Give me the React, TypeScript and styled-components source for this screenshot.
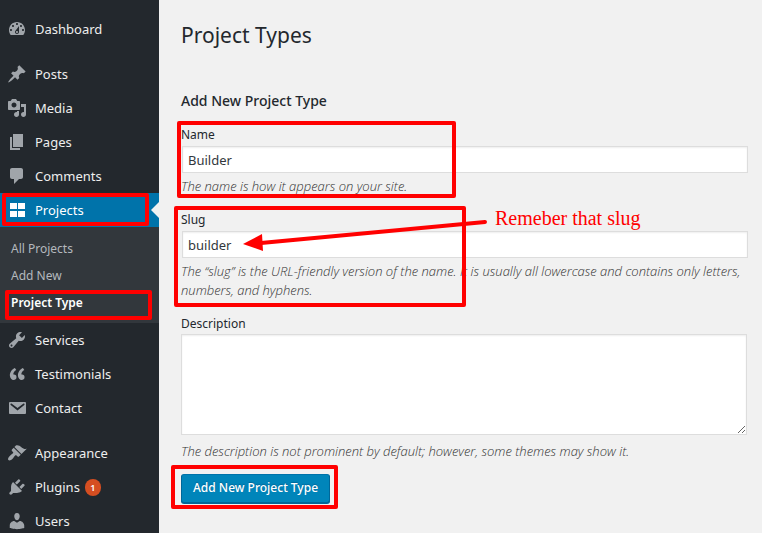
import React from "react";
import styled, { createGlobalStyle, css } from "styled-components";

const GlobalStyle = createGlobalStyle`
  *, *::before, *::after { box-sizing: border-box; }
  body {
    margin: 0;
    background: #f1f1f1;
    color: #32373c;
    font-family: "Noto Sans", "Open Sans", sans-serif;
    font-size: 12px;
    line-height: 19px;
  }
`;

const Shell = styled.div`
  display: flex;
  height: 100vh;
  overflow: hidden;
`;

const Sidebar = styled.nav`
  flex: 0 0 159px;
  padding-top: 12px;
  background: #23282d;
  overflow: hidden;
`;

const MenuGroup = styled.ul`
  list-style: none;
  margin: 0 0 11px;
  padding: 0;
`;

const MenuEntry = styled.li`
  position: relative;
`;

const MenuLink = styled.a<{ $current?: boolean }>`
  position: relative;
  display: flex;
  align-items: center;
  gap: 8px;
  height: 34px;
  padding-left: 7px;
  color: #eee;
  font-size: 13px;
  text-decoration: none;

  svg {
    width: 20px;
    height: 20px;
    fill: #a0a5aa;
  }

  ${({ $current }) =>
    $current &&
    css`
      background: #0073aa;
      color: #fff;

      svg {
        fill: #fff;
      }

      &::after {
        content: "";
        position: absolute;
        right: 0;
        top: 9px;
        border: 8px solid transparent;
        border-left-width: 0;
        border-right-color: #f1f1f1;
      }
    `}
`;

const Badge = styled.span`
  display: inline-flex;
  align-items: center;
  justify-content: center;
  width: 16px;
  height: 17px;
  margin-left: -3px;
  border-radius: 9px;
  background: #d54e21;
  color: #fff;
  font-size: 9px;
  font-weight: 600;
`;

const Submenu = styled.ul`
  list-style: none;
  margin: 0;
  padding: 8px 0 7px;
  background: #32373c;
`;

const SubmenuLink = styled.a<{ $current?: boolean }>`
  display: block;
  height: 27px;
  padding-left: 11px;
  line-height: 27px;
  text-decoration: none;
  color: ${({ $current }) => ($current ? "#fff" : "#b4b9be")};
  font-weight: ${({ $current }) => ($current ? 600 : 400)};
`;

const Main = styled.main`
  flex: 1;
  min-width: 0;
  padding: 20px 14px 0 22px;
`;

const PageTitle = styled.h1`
  margin: 0;
  color: #23282d;
  font-size: 21px;
  font-weight: 400;
  line-height: 30px;
`;

const FormTitle = styled.h2`
  margin: 41px 0 13px;
  color: #23282d;
  font-size: 14px;
  font-weight: 500;
  line-height: 20px;
`;

const Field = styled.div`
  position: relative;
  margin-bottom: 13px;
`;

const Label = styled.label`
  display: block;
  padding-top: 1px;
  line-height: 20px;
  color: #23282d;
`;

const controlStyle = css`
  display: block;
  border: 1px solid #ddd;
  border-radius: 0;
  background: #fff;
  box-shadow: inset 0 1px 2px rgba(0, 0, 0, 0.07);
  color: #32373c;
  font-family: inherit;
  outline: none;
`;

const TextInput = styled.input`
  ${controlStyle}
  width: calc(100% - 1px);
  height: 27px;
  margin: 1px 0 4px 1px;
  padding: 3px 5px;
  font-size: 13px;
`;

const TextArea = styled.textarea`
  ${controlStyle}
  width: calc(100% - 1px);
  height: 101px;
  margin: 0 0 7px;
  padding: 2px 6px;
  font-size: 13px;
  resize: vertical;
`;

const Hint = styled.p`
  margin: 0;
  color: #333;
  font-family: "Open Sans", "Noto Sans", sans-serif;
  font-size: 13px;
  font-style: italic;
  font-weight: 300;
`;

const SubmitRow = styled.div`
  position: relative;
  display: inline-block;
`;

const SubmitButton = styled.button`
  display: block;
  height: 29px;
  padding: 0 11px 2px;
  border: 1px solid #006799;
  border-top-color: #0073aa;
  border-radius: 3px;
  background: #0085ba;
  box-shadow: 0 1px 0 #006799;
  color: #fff;
  font-family: inherit;
  font-size: 12px;
  font-weight: 500;
  text-shadow: 0 -1px 1px #006799;
`;

type Inset = { top: number; left: number; width: number; height: number };

const Highlight = styled.div<{ $box: Inset }>`
  position: absolute;
  z-index: 2;
  top: ${({ $box }) => $box.top}px;
  left: ${({ $box }) => $box.left}px;
  width: ${({ $box }) => $box.width}px;
  height: ${({ $box }) => $box.height}px;
  border: 4px solid #f00;
  border-radius: 2px;
  pointer-events: none;
`;

const Arrow = styled.svg`
  position: absolute;
  z-index: 2;
  top: 8px;
  left: 62px;
  width: 250px;
  height: 36px;
  pointer-events: none;
`;

const Note = styled.span`
  position: absolute;
  z-index: 2;
  top: -3px;
  left: 314px;
  color: #f00;
  font-family: "Liberation Serif", serif;
  font-size: 20px;
  line-height: 24px;
  white-space: nowrap;
`;

const ICONS = {
  dashboard:
    "M3.76 16h12.48c1.1-1.37 1.76-3.11 1.76-5 0-4.42-3.58-8-8-8s-8 3.58-8 8c0 1.89.66 3.63 1.76 5zM10 4c.55 0 1 .45 1 1s-.45 1-1 1-1-.45-1-1 .45-1 1-1zM6 6c.55 0 1 .45 1 1s-.45 1-1 1-1-.45-1-1 .45-1 1-1zm8 0c.55 0 1 .45 1 1s-.45 1-1 1-1-.45-1-1 .45-1 1-1zm-5.37 5.55L12 7v6c0 1.1-.9 2-2 2s-2-.9-2-2c0-.57.24-1.08.63-1.45zM4 10c.55 0 1 .45 1 1s-.45 1-1 1-1-.45-1-1 .45-1 1-1zm12 0c.55 0 1 .45 1 1s-.45 1-1 1-1-.45-1-1 .45-1 1-1zm-5 3c0-.55-.45-1-1-1s-1 .45-1 1 .45 1 1 1 1-.45 1-1z",
  pin: "M10.44 3.02l1.82-1.82 6.36 6.35-1.83 1.82c-1.05-.68-2.48-.57-3.41.36l-.75.75c-.92.93-1.04 2.35-.35 3.41l-1.83 1.82-2.41-2.41-2.8 2.79c-.42.42-3.38 2.71-3.8 2.29s1.86-3.39 2.28-3.81l2.79-2.79L4.1 9.36l1.83-1.82c1.05.69 2.48.57 3.4-.36l.75-.75c.93-.92 1.05-2.35.36-3.41z",
  media:
    "M13 11V4c0-.55-.45-1-1-1h-1.67L9 1H5L3.67 3H2c-.55 0-1 .45-1 1v7c0 .55.45 1 1 1h10c.55 0 1-.45 1-1zM7 4.5c1.38 0 2.5 1.12 2.5 2.5S8.38 9.5 7 9.5 4.5 8.38 4.5 7 5.62 4.5 7 4.5zM14 6h5v10.5c0 1.38-1.12 2.5-2.5 2.5S14 17.88 14 16.5s1.12-2.5 2.5-2.5c.17 0 .34.02.5.05V9h-3V6zm-4 8.05V13h2v3.5c0 1.38-1.12 2.5-2.5 2.5S7 17.88 7 16.5 8.12 14 9.5 14c.17 0 .34.02.5.05z",
  page: "M6 15V2h10v13H6zm-1 1h8v2H3V5h2v11z",
  comment:
    "M5 2h9c1.1 0 2 .9 2 2v7c0 1.1-.9 2-2 2h-2l-5 5v-5H5c-1.1 0-2-.9-2-2V4c0-1.1.9-2 2-2z",
  grid: "M3 3h7v6H3zM11 3h7v6h-7zM3 11h7v6H3zM11 11h7v6h-7z",
  wrench:
    "M16.68 9.77c-1.34 1.34-3.3 1.67-4.95.99l-5.41 6.52c-.99.99-2.59.99-3.58 0s-.99-2.59 0-3.57l6.52-5.42c-.68-1.65-.35-3.61.99-4.95 1.28-1.28 3.12-1.62 4.72-1.06l-2.89 2.89 2.82 2.82 2.86-2.87c.53 1.58.18 3.39-1.08 4.65zM3.81 16.21c.4.39 1.04.39 1.43 0 .4-.4.4-1.04 0-1.43-.39-.4-1.03-.4-1.43 0-.39.39-.39 1.03 0 1.43z",
  quote:
    "M9.49 13.22c0-.74-.2-1.38-.61-1.9-.62-.78-1.83-.88-2.53-.72-.29-1.65 1.11-3.75 2.92-4.65L7.88 4c-2.73 1.3-5.42 4.28-4.96 8.05C3.21 14.43 4.59 16 6.54 16c.85 0 1.56-.25 2.12-.75s.83-1.18.83-2.03zm8.05 0c0-.74-.2-1.38-.61-1.9-.63-.78-1.83-.88-2.53-.72-.29-1.65 1.11-3.75 2.92-4.65L15.93 4c-2.73 1.3-5.41 4.28-4.95 8.05.29 2.38 1.66 3.95 3.61 3.95.85 0 1.56-.25 2.12-.75s.83-1.18.83-2.03z",
  mail: "M3.2 4h14.6c.8 0 1.2.4 1.2 1.2v9.6c0 .8-.4 1.2-1.2 1.2H3.2c-.8 0-1.2-.4-1.2-1.2V5.2c0-.8.4-1.2 1.2-1.2zm7.3 8.4l6.8-5.4c.4-.4.4-.8.1-1.1-.3-.4-.8-.4-1.2-.1l-5.7 4.2-5.7-4.2c-.4-.3-.9-.3-1.2.1-.3.3-.3.7.1 1.1z",
  brush:
    "M14.48 11.06L7.41 3.99l1.5-1.5c.5-.56 2.3-.47 3.51.32 1.21.8 1.43 1.28 2.91 2.1 1.18.64 2.45 1.26 4.45.85zm-.71.71L6.7 4.7 4.93 6.47c-.39.39-.39 1.02 0 1.41l1.06 1.06c.39.39.39 1.03 0 1.42-.6.6-1.43 1.11-2.21 1.69-.35.26-.7.53-1.01.84C1.43 14.23.4 16.08 1.4 17.07c.99 1 2.84-.03 4.18-1.36.31-.31.58-.66.85-1.02.57-.78 1.08-1.61 1.69-2.21.39-.39 1.02-.39 1.41 0l1.06 1.06c.39.39 1.02.39 1.41 0z",
  plug: "M13.11 4.36L9.87 7.6 8 5.73l3.24-3.24c.35-.34 1.05-.2 1.56.32.52.51.66 1.21.31 1.55zm-8 1.77l.91-1.12 9.01 9.01-1.19.84c-.71.71-2.63 1.16-3.82 1.16H6.14L4.9 17.26c-.59.59-1.54.59-2.12 0-.59-.58-.59-1.53 0-2.12l1.24-1.24v-3.88c0-1.13.4-3.19 1.09-3.89zm7.26 3.97l3.24-3.24c.34-.35 1.04-.21 1.55.31.52.51.66 1.21.31 1.55l-3.24 3.25z",
  user: "M10 9.25c-2.27 0-2.73-3.44-2.73-3.44C7 4.02 7.82 2 9.97 2c2.16 0 2.98 2.02 2.71 3.81 0 0-.41 3.44-2.68 3.44zm0 2.57L12.72 10c2.39 0 4.52 2.33 4.52 4.53v2.49s-3.65 1.13-7.24 1.13c-3.65 0-7.24-1.13-7.24-1.13v-2.49c0-2.25 1.94-4.48 4.47-4.48z",
};

type Item = {
  label: string;
  icon: keyof typeof ICONS;
  count?: number;
  children?: string[];
};

const GROUPS: Item[][] = [
  [{ label: "Dashboard", icon: "dashboard" }],
  [
    { label: "Posts", icon: "pin" },
    { label: "Media", icon: "media" },
    { label: "Pages", icon: "page" },
    { label: "Comments", icon: "comment" },
    {
      label: "Projects",
      icon: "grid",
      children: ["All Projects", "Add New", "Project Type"],
    },
    { label: "Services", icon: "wrench" },
    { label: "Testimonials", icon: "quote" },
    { label: "Contact", icon: "mail" },
  ],
  [
    { label: "Appearance", icon: "brush" },
    { label: "Plugins", icon: "plug", count: 1 },
    { label: "Users", icon: "user" },
  ],
];

function MenuItem({ item }: { item: Item }) {
  const current = Boolean(item.children);
  return (
    <MenuEntry>
      <MenuLink href="#" $current={current}>
        <svg viewBox="0 0 20 20" aria-hidden="true">
          <path d={ICONS[item.icon]} />
        </svg>
        {item.label}
        {item.count && <Badge>{item.count}</Badge>}
      </MenuLink>
      {current && <Highlight $box={{ top: 0, left: 2, width: 147, height: 33 }} />}
      {item.children && (
        <Submenu>
          {item.children.map((label) => {
            const selected = label === "Project Type";
            return (
              <MenuEntry key={label}>
                <SubmenuLink href="#" $current={selected}>
                  {label}
                </SubmenuLink>
                {selected && (
                  <Highlight $box={{ top: 1, left: 5, width: 147, height: 30 }} />
                )}
              </MenuEntry>
            );
          })}
        </Submenu>
      )}
    </MenuEntry>
  );
}

export default function App() {
  return (
    <>
      <GlobalStyle />
      <Shell>
        <Sidebar aria-label="Main menu">
          {GROUPS.map((group) => (
            <MenuGroup key={group[0].label}>
              {group.map((item) => (
                <MenuItem key={item.label} item={item} />
              ))}
            </MenuGroup>
          ))}
        </Sidebar>
        <Main>
          <PageTitle>Project Types</PageTitle>
          <FormTitle>Add New Project Type</FormTitle>
          <form onSubmit={(event) => event.preventDefault()}>
            <Field>
              <Label htmlFor="name">Name</Label>
              <TextInput id="name" type="text" defaultValue="Builder" />
              <Hint>The name is how it appears on your site.</Hint>
              <Highlight $box={{ top: -3, left: -4, width: 279, height: 77 }} />
            </Field>
            <Field>
              <Label htmlFor="slug">Slug</Label>
              <TextInput id="slug" type="text" defaultValue="builder" />
              <Hint>
                The “slug” is the URL-friendly version of the name. It is usually all
                lowercase and contains only letters, numbers, and hyphens.
              </Hint>
              <Highlight $box={{ top: -3, left: -7, width: 292, height: 101 }} />
              <Arrow viewBox="0 0 250 36" aria-hidden="true">
                <path d="M18 26L242 5" stroke="#f00" strokeWidth="4" strokeLinecap="round" />
                <path d="M0 27L19 17L20 34Z" fill="#f00" />
              </Arrow>
              <Note>Remeber that slug</Note>
            </Field>
            <Field>
              <Label htmlFor="description">Description</Label>
              <TextArea id="description" />
              <Hint>
                The description is not prominent by default; however, some themes may
                show it.
              </Hint>
            </Field>
            <SubmitRow>
              <SubmitButton type="submit">Add New Project Type</SubmitButton>
              <Highlight $box={{ top: -9, left: -10, width: 167, height: 44 }} />
            </SubmitRow>
          </form>
        </Main>
      </Shell>
    </>
  );
}
